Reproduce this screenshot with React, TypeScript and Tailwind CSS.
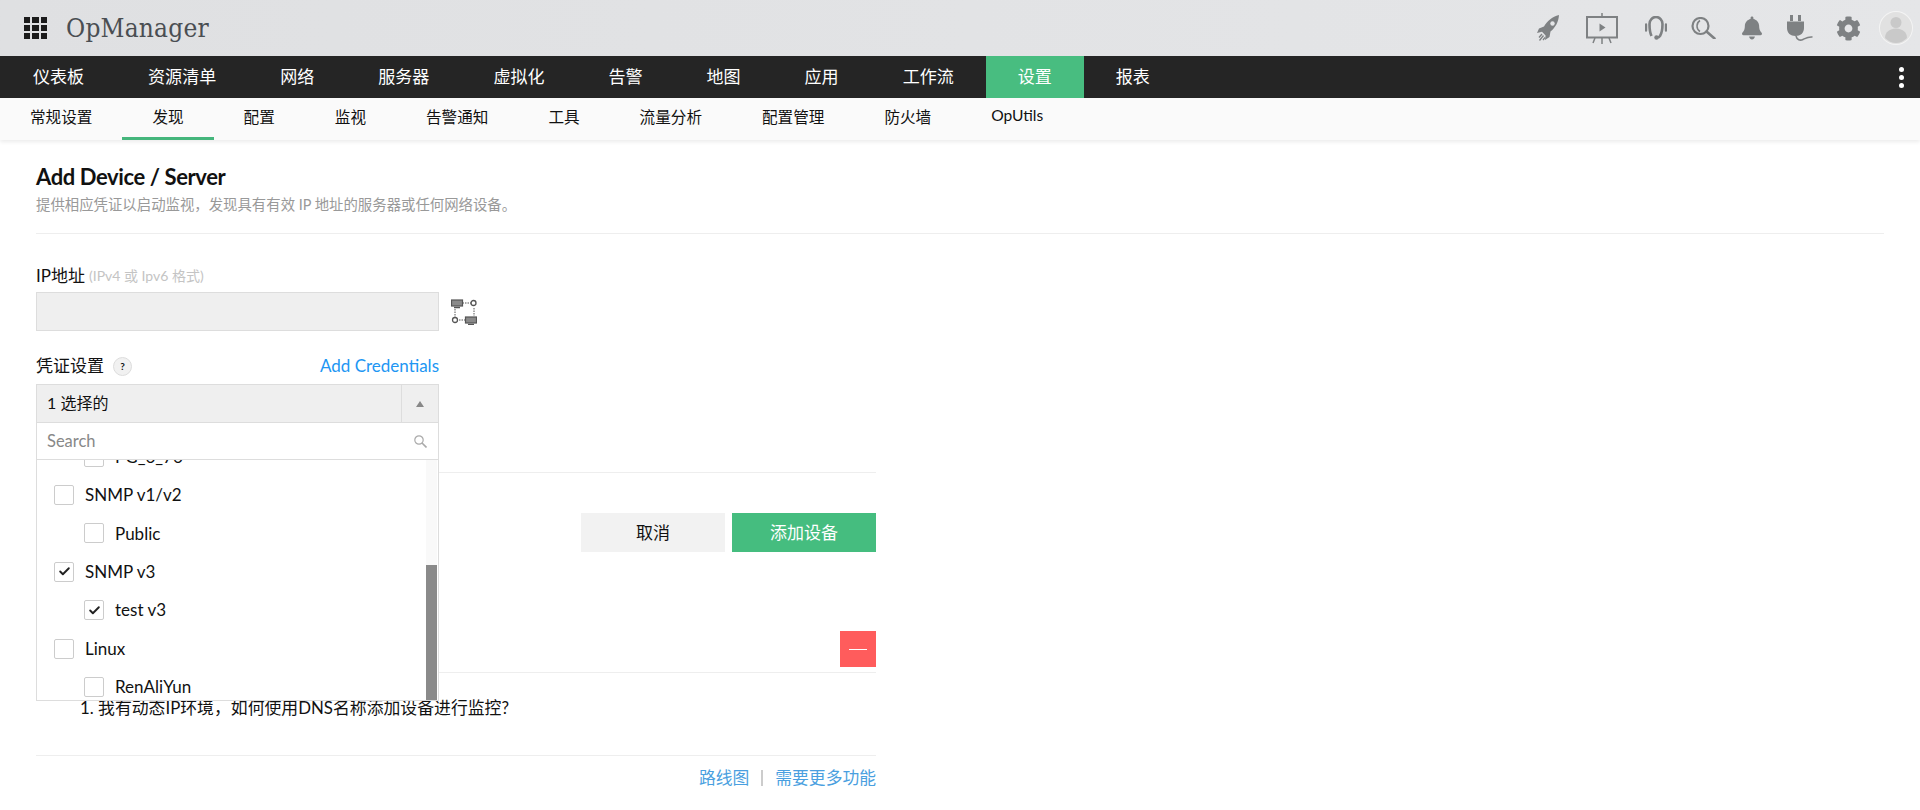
import React from 'react';
import { Check } from 'lucide-react';
import { FaBell, FaCog } from 'react-icons/fa';

const mainNav = [
  { label: '仪表板' },
  { label: '资源清单' },
  { label: '网络' },
  { label: '服务器' },
  { label: '虚拟化' },
  { label: '告警' },
  { label: '地图' },
  { label: '应用' },
  { label: '工作流' },
  { label: '设置', active: true },
  { label: '报表' },
];

const subNav = [
  { label: '常规设置' },
  { label: '发现', active: true },
  { label: '配置' },
  { label: '监视' },
  { label: '告警通知' },
  { label: '工具' },
  { label: '流量分析' },
  { label: '配置管理' },
  { label: '防火墙' },
];

const credentials = [
  { label: 'PG_6_76', child: true },
  { label: 'SNMP v1/v2' },
  { label: 'Public', child: true },
  { label: 'SNMP v3', checked: true },
  { label: 'test v3', child: true, checked: true },
  { label: 'Linux' },
  { label: 'RenAliYun', child: true },
];

const HeaderIcons = () => (
  <div className="flex items-center text-[#7e8183]">
    <svg className="ml-0 w-[22px] h-[26px]" viewBox="0 0 22 26" fill="currentColor">
      <path d="M22 0C15 2 10 6 7 11.5L2 13.5 0 18l5-1.2 3.6 3.6L8 25l4.5-3 1-5.500C18.500 12.500 21.500 7 22 0Z" />
      <circle cx="15.500" cy="8.500" r="2.200" fill="#e4e5e7" />
      <path d="M5 19l-3 3.500M6.500 20.500l-4 5M8 22.500l-2 2.500" stroke="currentColor" strokeWidth="1.300" fill="none" />
    </svg>
    <svg className="ml-[27px] w-8 h-[31px]" viewBox="0 0 32 31" fill="none" stroke="currentColor">
      <path d="M16 0v4M7 30l2-5M16 31v-6M25 30l-2-5" strokeWidth="1.500" />
      <rect x="1" y="4" width="30" height="20.500" strokeWidth="2" />
      <path d="M13.500 10.500l6 4-6 4Z" fill="currentColor" stroke="none" />
    </svg>
    <svg className="ml-[27px] w-[22px] h-6" viewBox="0 0 22 24" fill="none" stroke="currentColor">
      <path d="M6.500 20C4.500 16 4.500 13 4.500 8a6.500 7 0 0 1 13 0c0 5 0 8-2.500 12-.5 1-1.500 1.500-3 1.500" strokeWidth="2.600" />
      <path d="M1 8.500v6M21 8.500v6" strokeWidth="2.400" strokeLinecap="round" />
      <circle cx="11.500" cy="21.500" r="2.200" fill="currentColor" stroke="none" />
    </svg>
    <svg className="ml-6 w-[25px] h-[22px]" viewBox="0 0 25 22" fill="none" stroke="currentColor">
      <circle cx="9.500" cy="9" r="8" strokeWidth="2.200" />
      <path d="M9 3.500C5 6 5 12 9 14.500" strokeWidth="1.500" />
      <path d="M15.500 14.500L23.500 21.500" strokeWidth="2.600" strokeLinecap="round" />
    </svg>
    <FaBell className="ml-[26px] w-5 h-6" />
    <svg className="ml-[25px] w-[26px] h-[26px]" viewBox="0 0 26 26" fill="currentColor">
      <path d="M3 0h3v6H3ZM11 0h3v6h-3ZM0 6.500h17V13c0 5-3.500 8-8.500 8S0 18 0 13Z" />
      <path d="M9 21c1 4 4 5 7 3.500s5-3 9.500-2.500" fill="none" stroke="currentColor" strokeWidth="1.600" />
    </svg>
    <FaCog className="ml-[23px] w-[25px] h-[25px]" />
    <svg className="ml-[18px] w-[34px] h-[34px]" viewBox="0 0 34 34">
      <circle cx="17" cy="17" r="17" fill="#f4f4f4" />
      <circle cx="17" cy="17" r="16" fill="#e1e1e1" />
      <circle cx="17" cy="11.500" r="5.500" fill="#c9c9c9" />
      <path d="M6 27c0-6 5-9.500 11-9.500S28 21 28 27c-3 3-7 5-11 5s-8-2-11-5Z" fill="#c9c9c9" />
    </svg>
  </div>
);

const Header = () => (
  <header className="h-14 flex items-center justify-between pl-6 pr-[7px] bg-gradient-to-r from-[#dfe0e2] to-[#e5e6e8]">
    <div className="flex items-center">
      <div className="grid grid-cols-3 gap-[2px] w-[23px]">
        {Array.from({ length: 9 }).map((_, i) => (
          <span key={i} className="h-[6px] bg-[#1b1b1b]" />
        ))}
      </div>
      <span className="ml-[19px] text-[26px] leading-none text-[#4a4e52] tracking-[0.2px] [font-family:'DejaVu_Serif_Condensed','DejaVu_Serif',serif] font-light">
        OpManager
      </span>
    </div>
    <HeaderIcons />
  </header>
);

const MainNav = () => (
  <nav className="h-[42px] flex items-stretch justify-between pl-px pr-4 bg-[#252525] text-white text-[17.05px]">
    <div className="flex">
      {mainNav.map((item) => (
        <a key={item.label} className={`flex items-center px-8 ${item.active ? 'bg-[#48bd80]' : ''}`}>
          {item.label}
        </a>
      ))}
    </div>
    <div className="flex flex-col justify-center gap-[3px]">
      <span className="w-[5px] h-[5px] rounded-full bg-white" />
      <span className="w-[5px] h-[5px] rounded-full bg-white" />
      <span className="w-[5px] h-[5px] rounded-full bg-white" />
    </div>
  </nav>
);

const SubNav = () => (
  <nav className="h-[42px] flex bg-[#fafafa] text-[15.6px] text-[#111] shadow-[0_2px_4px_rgba(0,0,0,0.08)]">
    {subNav.map((item) => (
      <a
        key={item.label}
        className={`flex items-center px-[30px] border-b-[3px] ${item.active ? 'border-[#45b67c]' : 'border-transparent'}`}
      >
        {item.label}
      </a>
    ))}
    <a className="px-[30px] pt-[6px]">OpUtils</a>
  </nav>
);

const TopologyIcon = () => (
  <svg className="ml-3 w-[26px] h-[26px] shrink-0" viewBox="0 0 26 26" fill="none" stroke="#555">
    <rect x="0.500" y="1" width="11" height="6" fill="#8a8a8a" strokeWidth="1.200" />
    <path d="M3 8.500h6" strokeWidth="1.500" />
    <path d="M11.500 4h9M4 10v8M23 9v8M8 21h7" strokeWidth="1" strokeDasharray="1.500 1" />
    <circle cx="22.500" cy="4" r="2.500" strokeWidth="1.300" />
    <circle cx="4" cy="21" r="2.500" strokeWidth="1.300" />
    <rect x="14.500" y="18" width="11" height="6" fill="#8a8a8a" strokeWidth="1.200" />
    <path d="M17 25.500h6" strokeWidth="1.500" />
  </svg>
);

const CredentialRow = ({ label, child, checked }: { label: string; child?: boolean; checked?: boolean }) => (
  <div className={`h-[38.4px] flex items-center gap-[11px] ${child ? 'pl-[47px]' : 'pl-[17px]'}`}>
    <span className="w-5 h-5 shrink-0 flex items-center justify-center bg-white border border-[#ccc] rounded-[2px]">
      {checked && <Check size={13} strokeWidth={3.5} className="text-[#222]" />}
    </span>
    <span className="text-[17px] text-[#111]">{label}</span>
  </div>
);

const CredentialDropdown = () => (
  <div className="absolute -left-px top-[calc(100%+1px)] w-[403px] bg-white border-x border-b border-[#ddd]">
    <div className="h-[37px] flex items-center justify-between pl-[10px] pr-[11px] border-b border-[#ddd]">
      <span className="text-[16.5px] text-[#888]">Search</span>
      <svg className="w-[13px] h-[13px]" viewBox="0 0 13 13" fill="none" stroke="#aaa">
        <circle cx="5" cy="5" r="4.200" strokeWidth="1.200" />
        <path d="M8 8l4.500 4.500" strokeWidth="1.600" />
      </svg>
    </div>
    <div className="relative h-[240px] overflow-hidden">
      <div className="-mt-[22.6px]">
        {credentials.map((c) => (
          <CredentialRow key={c.label} {...c} />
        ))}
      </div>
      <div className="absolute right-px top-0 bottom-0 w-[11px] bg-[#f9f9f9]">
        <div className="absolute left-0 right-0 bottom-0 h-[135px] bg-[#8a8a8a]" />
      </div>
    </div>
  </div>
);

const Form = () => (
  <div className="w-[840px] text-[#111] text-[17px]">
    <div className="mt-[31px] h-[22px] flex items-center">
      IP地址
      <span className="ml-1 text-sm text-[#c4c4c4]">(IPv4 或 Ipv6 格式)</span>
    </div>
    <div className="mt-[5px] flex items-center">
      <div className="w-[403px] h-[39px] bg-[#efefef] border border-[#ddd]" />
      <TopologyIcon />
    </div>

    <div className="mt-6 w-[403px] h-[22px] flex items-center justify-between">
      <div className="flex items-center">
        凭证设置
        <span className="ml-[9px] w-[19px] h-[19px] flex items-center justify-center rounded-full bg-[#f1f1f1] border border-[#ddd] text-[10px] font-bold">
          ?
        </span>
      </div>
      <a className="text-[#2196f3]">Add Credentials</a>
    </div>

    <div className="relative z-10 mt-[7px] w-[403px] h-[39px] flex bg-[#efefef] border border-[#ddd]">
      <span className="flex-1 flex items-center pl-[10px] pb-[2px] text-base">1 选择的</span>
      <span className="w-[37px] flex items-center justify-center border-l border-[#ddd]">
        <span className="w-0 h-0 border-x-[4px] border-x-transparent border-b-[6px] border-b-[#888]" />
      </span>
      <CredentialDropdown />
    </div>

    <div className="mt-[49px] border-t border-[#eee]" />

    <div className="mt-[40px] flex justify-end gap-[7px]">
      <button className="w-[144px] h-[39px] bg-[#f2f2f2] text-[#111]">取消</button>
      <button className="w-[144px] h-[39px] bg-[#45bd7f] text-white">添加设备</button>
    </div>

    <div className="mt-[79px] flex justify-end">
      <button className="w-9 h-9 flex items-center justify-center bg-[#ff5c5c]">
        <span className="w-[18px] h-px bg-white" />
      </button>
    </div>

    <div className="mt-[5px] border-t border-[#eee]" />

    <p className="mt-[23px] h-6 pl-[44px] text-[16.85px] leading-6">1. 我有动态IP环境，如何使用DNS名称添加设备进行监控?</p>

    <div className="mt-[35px] border-t border-[#eee]" />

    <div className="mt-[9px] flex items-center justify-end text-[16.8px] text-[#4a9fe0]">
      <a>路线图</a>
      <span className="mx-[12px] w-[2px] h-4 bg-[#ccc]" />
      <a>需要更多功能</a>
    </div>
  </div>
);

export default function App() {
  return (
    <div className="h-screen overflow-hidden bg-white [font-family:Lato,'Noto_Sans_CJK_SC',sans-serif]">
      <Header />
      <MainNav />
      <SubNav />
      <main className="px-9">
        <h1 className="mt-6 text-[22px] leading-[26px] font-bold text-[#111] tracking-[-0.4px]">Add Device / Server</h1>
        <p className="mt-[5px] text-[14.4px] leading-5 text-[#999]">提供相应凭证以启动监视，发现具有有效 IP 地址的服务器或任何网络设备。</p>
        <div className="mt-[18px] border-t border-[#eee]" />
        <Form />
      </main>
    </div>
  );
}
